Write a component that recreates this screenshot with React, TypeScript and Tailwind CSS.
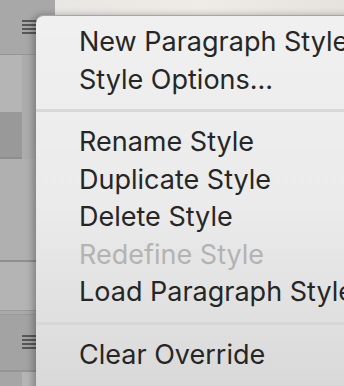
import type { ReactNode } from 'react';

type Item = { label: string; disabled?: boolean } | 'sep';

const ITEMS: Item[] = [
	{ label: 'New Paragraph Style...' },
	{ label: 'Style Options...' },
	'sep',
	{ label: 'Rename Style' },
	{ label: 'Duplicate Style' },
	{ label: 'Delete Style' },
	{ label: 'Redefine Style', disabled: true },
	{ label: 'Load Paragraph Styles...' },
	'sep',
	{ label: 'Clear Override' },
];

function Hamburger() {
	return (
		<div className="flex flex-col gap-[2px] w-[20px]">
			<div className="h-[2px] bg-[#575757]" />
			<div className="h-[2px] bg-[#575757]" />
			<div className="h-[2px] bg-[#575757]" />
			<div className="h-[2px] bg-[#575757]" />
		</div>
	);
}

function Block({ className, children }: { className: string; children?: ReactNode }) {
	return <div className={className}>{children}</div>;
}

function SidePanel() {
	return (
		<div className="w-[55px] h-full flex flex-col bg-[#b2b2b2]">
			<Block className="h-[54px] bg-[#a8a8a8] pt-[20px] pl-[22px]">
				<Hamburger />
			</Block>
			<Block className="h-[1px] bg-[#959595]" />
			<div className="flex h-[104px]">
				<div className="w-[22px] flex flex-col">
					<div className="h-[57px] bg-[#b5b5b5]" />
					<div className="h-[45px] bg-[#999999]" />
					<div className="h-[2px] bg-[#8e8e8e]" />
				</div>
				<div className="flex-1 bg-[#acacac]" />
			</div>
			<Block className="h-[101px] bg-[#b0b0b0]" />
			<Block className="h-[2px] bg-[#8f8f8f]" />
			<Block className="h-[48px] bg-[#b4b4b4]" />
			<Block className="h-[1px] bg-[#999999]" />
			<Block className="h-[3px] bg-[#a9a9a9]" />
			<Block className="h-[1px] bg-[#999999]" />
			<Block className="h-[55px] bg-[#a3a3a3] pt-[20px] pl-[22px]">
				<Hamburger />
			</Block>
			<Block className="h-[2px] bg-[#959595]" />
			<div className="flex flex-1">
				<div className="w-[22px] bg-[#a6a6a6]" />
				<div className="flex-1 bg-[#b5b5b5]" />
			</div>
		</div>
	);
}

function Menu() {
	return (
		<div className="absolute left-[36px] top-[15px] w-[330px] h-[380px] rounded-tl-[8px] border-t border-[#a5a5a5] bg-linear-to-b from-[#f0f0f0] via-[#ebebeb] to-[#d8d8d8] shadow-[-3px_0_7px_rgba(0,0,0,0.28)] pt-[7px]">
			{ITEMS.map((item, i) =>
				item === 'sep' ? (
					<div key={i} className="my-[11px] h-[3px] bg-[#d8d8d8]" />
				) : (
					<div
						key={i}
						className={
							item.disabled
								? 'h-[37.5px] leading-[37.5px] pl-[43px] whitespace-nowrap text-[#b3b3b3]'
								: 'h-[37.5px] leading-[37.5px] pl-[43px] whitespace-nowrap text-[#262626]'
						}
					>
						{item.label}
					</div>
				),
			)}
		</div>
	);
}

export default function App() {
	return (
		<div className="relative w-[344px] h-[386px] overflow-hidden font-['Inter',sans-serif] text-[27px]">
			<div className="flex h-full">
				<SidePanel />
				<div className="flex-1 h-[15px] bg-linear-to-r from-[#e9e7e3] via-[#efebe6] to-[#e6e2dd]" />
			</div>
			<Menu />
		</div>
	);
}
